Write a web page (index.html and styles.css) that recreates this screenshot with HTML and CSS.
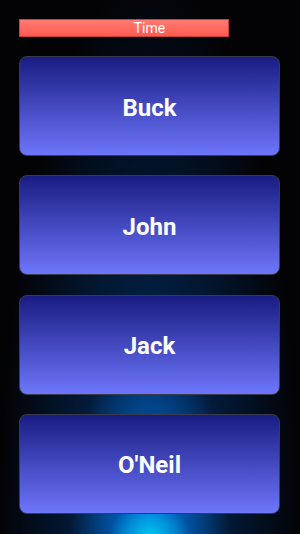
FILE: index.html
```html
<!DOCTYPE html>
<html lang="en">
<head>
  <meta charset="UTF-8">
  <meta name="viewport" content="width=device-width, initial-scale=1.0">
  <title>Quiz</title>
  <link rel="stylesheet" href="styles.css">
</head>
<body>
  <div class="screen">
    <!-- 计时条 -->
    <div class="timer">
      <div class="timer-fill" style="width: 80.5%"></div>
      <span class="timer-text">Time</span>
    </div>

    <!-- 答案按钮 -->
    <div class="answers">
      <a class="answer" href="#">Buck</a>
      <a class="answer" href="#">John</a>
      <a class="answer" href="#">Jack</a>
      <a class="answer" href="#">O'Neil</a>
    </div>
  </div>
</body>
</html>
```

FILE: styles.css
```css
html, body {
    margin: 0;
    padding: 0;
    height: 100%;
}

body {
    background: #030306;
    font-family: Roboto, "Liberation Sans", sans-serif;
}

.screen {
    height: 534px;
    box-sizing: border-box;
    padding: 19px 20px 0 19px;
    background:
        radial-gradient(ellipse 40px 30px at 50% 100%, rgba(0, 200, 235, 0.9), rgba(0, 200, 235, 0) 100%),
        radial-gradient(ellipse 80px 200px at 50% 100%, rgba(0, 120, 230, 1), rgba(0, 70, 160, 0) 100%),
        radial-gradient(ellipse 150px 560px at 50% 100%, rgba(0, 60, 130, 0.8), rgba(0, 20, 50, 0) 100%),
        #030306;
}

/* 计时条 */
.timer {
    position: relative;
    height: 18px;
    margin-bottom: 19px;
}

.timer-fill {
    height: 18px;
    box-sizing: border-box;
    background: linear-gradient(#ff7b72, #ff5a50);
    border: 1px solid #c8423a;
}

.timer-text {
    position: absolute;
    top: 0;
    left: 0;
    right: 0;
    text-align: center;
    color: #fff;
    font-size: 14px;
    line-height: 18px;
}

/* 答案按钮 */
.answers {
    display: flex;
    flex-direction: column;
    gap: 19.3px;
}

.answer {
    display: flex;
    align-items: center;
    justify-content: center;
    height: 100px;
    box-sizing: border-box;
    padding-top: 3px;
    border: 1px solid #3a3a4a;
    border-radius: 8px;
    background: linear-gradient(#191c82, #6d76fb);
    color: #fff;
    font-size: 24px;
    font-weight: bold;
    text-decoration: none;
}
```
